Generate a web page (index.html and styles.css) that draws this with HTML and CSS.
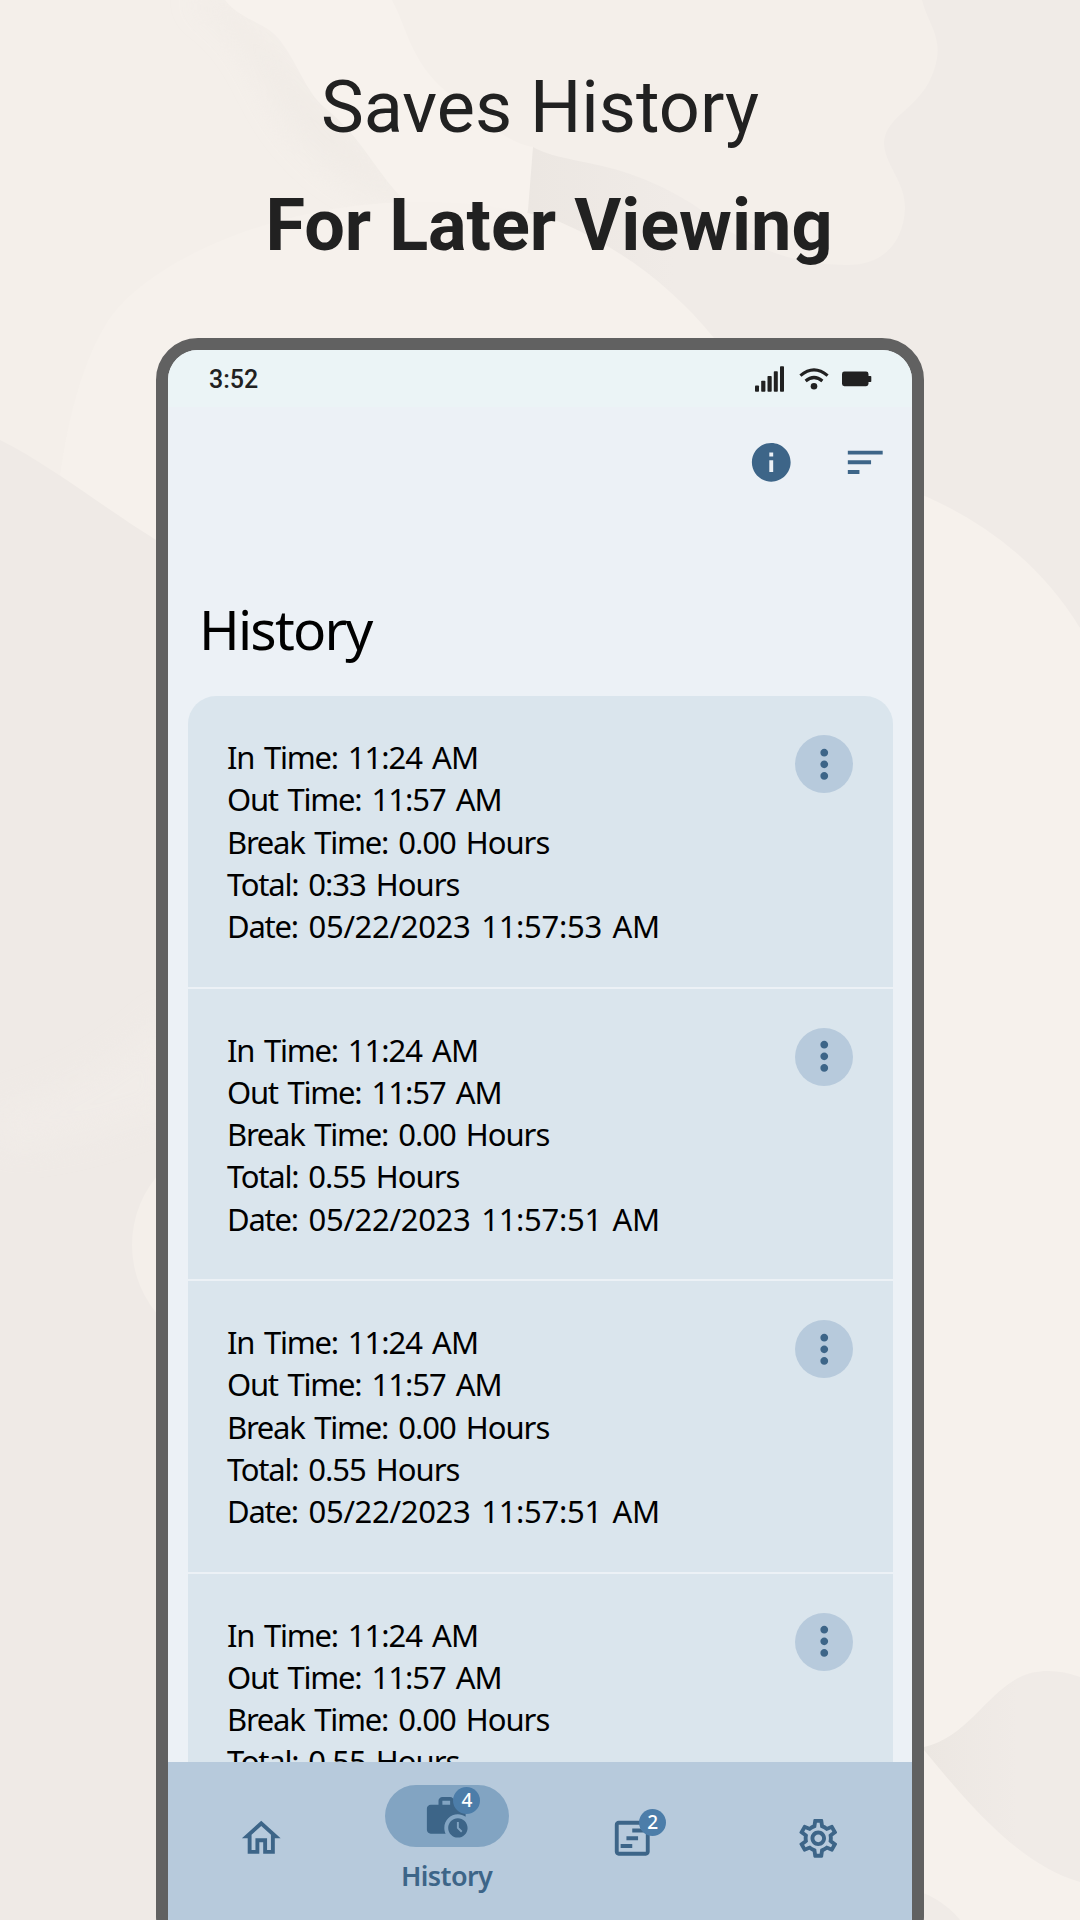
FILE: index.html
```html
<!DOCTYPE html>
<html lang="en">
<head>
<meta charset="utf-8">
<title>Saves History For Later Viewing</title>
<link rel="stylesheet" href="styles.css">
</head>
<body>
<svg class="backdrop" viewBox="0 0 1080 1920" aria-hidden="true">
  <defs>
    <filter id="soft" x="-20%" y="-20%" width="140%" height="140%"><feGaussianBlur stdDeviation="14"/></filter>
    <linearGradient id="fold" x1="0" x2="1"><stop offset="0" stop-color="#ebe6e1"/><stop offset=".3" stop-color="#f0ebe7"/></linearGradient>
    <linearGradient id="leaf" x1="0" x2="1"><stop offset="0" stop-color="#ece7e2"/><stop offset=".6" stop-color="#f0ebe7"/></linearGradient>
  </defs>
  <rect width="1080" height="1920" fill="#f4efea"/>
  <path d="M190 0C260 40 255 90 300 140C330 175 360 190 395 203L420 203L310 85L225 0Z" fill="#efeae5" opacity=".7" filter="url(#soft)"/>
  <path d="M225 0C240 20 265 22 278 38C298 62 304 90 325 108C365 140 380 180 408 203L540 215L533 147C505 143 480 115 455 98C412 68 408 30 392 0Z" fill="#f7f2ed"/>
  <path d="M533 147C555 160 590 160 630 174C675 190 700 208 720 225C760 252 800 265 848 265C885 265 904 240 905 208C905 180 884 165 884 142C886 115 922 108 934 70C945 38 928 25 922 0H1080V640H700L500 300L528 210Z" fill="url(#fold)"/>
  <path d="M60 475C68 420 82 360 110 318C150 262 270 205 410 202C460 201 510 206 560 222C625 250 675 290 714 338V600H156Z" fill="#f6f1ec"/>
  <path d="M0 440C50 465 100 505 156 540H300V1920H0Z" fill="#efeae6"/>
  <path d="M0 1105Q90 1085 170 1010V1110Q70 1150 0 1150Z" fill="#f2ede9" opacity=".6" filter="url(#soft)"/>
  <circle cx="239" cy="1245" r="107" fill="#f4efea"/>
  <path d="M900 486Q1020 530 1080 628V1920H900Z" fill="#f6f1ec"/>
  <path d="M924 1747C965 1738 985 1696 1018 1678C1038 1668 1060 1670 1080 1677V1882C1020 1866 965 1800 924 1750Z" fill="url(#leaf)"/>
  <path d="M900 1885Q940 1895 960 1920H900Z" fill="#f0ebe7"/>
</svg>

<header class="promo">
  <p class="promo-line">Saves History</p>
  <p class="promo-line promo-strong">For Later Viewing</p>
</header>

<main class="phone">
  <div class="status">
    <span class="clock">3:52</span>
    <div class="status-icons">
      <svg width="30" height="26" viewBox="0 0 30 26" fill="#212121"><rect y="19.5" width="4" height="6.3" rx=".8"/><rect x="6.2" y="14.7" width="4.2" height="11.1" rx=".8"/><rect x="12.5" y="10" width="4.2" height="15.8" rx=".8"/><rect x="18.8" y="5.2" width="4" height="20.6" rx=".8"/><rect x="25" y=".3" width="4" height="25.5" rx=".8"/></svg>
      <svg width="30" height="22" viewBox="0 0 30 22"><path d="M1.4 7.6Q15-4 28.6 7.6M6.6 13Q15 6 23.4 13" fill="none" stroke="#212121" stroke-width="3.2"/><circle cx="15" cy="18.3" r="3.3" fill="#212121"/></svg>
      <svg width="30" height="16" viewBox="0 0 30 16" fill="#212121"><rect y=".6" width="26.5" height="14.6" rx="2.4"/><rect x="25" y="5" width="4.3" height="6" rx=".8"/></svg>
    </div>
  </div>

  <div class="toolbar">
    <svg class="icon" viewBox="0 0 24 24"><path d="M12 2C6.48 2 2 6.48 2 12s4.48 10 10 10 10-4.48 10-10S17.52 2 12 2zm1 15h-2v-6h2v6zm0-8h-2V7h2v2z"/></svg>
    <svg class="icon" viewBox="0 0 24 24"><path d="M3 18h6v-2H3v2zM3 6v2h18V6H3zm0 7h12v-2H3v2z"/></svg>
  </div>

  <h1 class="title">History</h1>

  <section class="list">
    <article class="entry">
      <div class="lines"><p><span class="key">In Time:</span> 11:24 AM</p><p><span class="key">Out Time:</span> 11:57 AM</p><p><span class="key">Break Time:</span> 0.00 Hours</p><p><span class="key">Total:</span> 0:33 Hours</p><p class="date"><span class="key">Date:</span> 05/22/2023 11:57:53 AM</p></div>
      <button class="more" aria-label="More"><svg class="icon" viewBox="0 0 24 24"><path d="M12 8c1.1 0 2-.9 2-2s-.9-2-2-2-2 .9-2 2 .9 2 2 2zm0 2c-1.1 0-2 .9-2 2s.9 2 2 2 2-.9 2-2-.9-2-2-2zm0 6c-1.1 0-2 .9-2 2s.9 2 2 2 2-.9 2-2-.9-2-2-2z"/></svg></button>
    </article>
    <article class="entry">
      <div class="lines"><p><span class="key">In Time:</span> 11:24 AM</p><p><span class="key">Out Time:</span> 11:57 AM</p><p><span class="key">Break Time:</span> 0.00 Hours</p><p><span class="key">Total:</span> 0.55 Hours</p><p class="date"><span class="key">Date:</span> 05/22/2023 11:57:51 AM</p></div>
      <button class="more" aria-label="More"><svg class="icon" viewBox="0 0 24 24"><path d="M12 8c1.1 0 2-.9 2-2s-.9-2-2-2-2 .9-2 2 .9 2 2 2zm0 2c-1.1 0-2 .9-2 2s.9 2 2 2 2-.9 2-2-.9-2-2-2zm0 6c-1.1 0-2 .9-2 2s.9 2 2 2 2-.9 2-2-.9-2-2-2z"/></svg></button>
    </article>
    <article class="entry">
      <div class="lines"><p><span class="key">In Time:</span> 11:24 AM</p><p><span class="key">Out Time:</span> 11:57 AM</p><p><span class="key">Break Time:</span> 0.00 Hours</p><p><span class="key">Total:</span> 0.55 Hours</p><p class="date"><span class="key">Date:</span> 05/22/2023 11:57:51 AM</p></div>
      <button class="more" aria-label="More"><svg class="icon" viewBox="0 0 24 24"><path d="M12 8c1.1 0 2-.9 2-2s-.9-2-2-2-2 .9-2 2 .9 2 2 2zm0 2c-1.1 0-2 .9-2 2s.9 2 2 2 2-.9 2-2-.9-2-2-2zm0 6c-1.1 0-2 .9-2 2s.9 2 2 2 2-.9 2-2-.9-2-2-2z"/></svg></button>
    </article>
    <article class="entry">
      <div class="lines"><p><span class="key">In Time:</span> 11:24 AM</p><p><span class="key">Out Time:</span> 11:57 AM</p><p><span class="key">Break Time:</span> 0.00 Hours</p><p><span class="key">Total:</span> 0.55 Hours</p></div>
      <button class="more" aria-label="More"><svg class="icon" viewBox="0 0 24 24"><path d="M12 8c1.1 0 2-.9 2-2s-.9-2-2-2-2 .9-2 2 .9 2 2 2zm0 2c-1.1 0-2 .9-2 2s.9 2 2 2 2-.9 2-2-.9-2-2-2zm0 6c-1.1 0-2 .9-2 2s.9 2 2 2 2-.9 2-2-.9-2-2-2z"/></svg></button>
    </article>
  </section>

  <nav class="nav">
    <div class="tab"><svg class="icon" viewBox="0 0 24 24"><path d="M12 5.69l5 4.5V18h-2v-6H9v6H7v-7.81l5-4.5M12 3L2 12h3v8h6v-6h2v6h6v-8h3L12 3z"/></svg></div>
    <div class="tab active">
      <div class="pill">
        <div class="badged"><svg class="icon" viewBox="0 0 24 24"><path d="M18 11c1.49 0 2.87.47 4 1.26V8c0-1.11-.89-2-2-2h-4V4c0-1.11-.89-2-2-2h-4c-1.11 0-2 .89-2 2v2H4c-1.11 0-1.99.89-1.99 2L2 19c0 1.11.89 2 2 2h7.68c-.43-.91-.68-1.92-.68-3 0-3.87 3.13-7 7-7zm-8-7h4v2h-4V4z"/><path d="M18 13c-2.76 0-5 2.24-5 5s2.24 5 5 5 5-2.24 5-5-2.24-5-5-5zm1.65 7.35L17.5 18.2V15h1v2.79l1.85 1.85-.7.71z"/></svg><span class="badge">4</span></div>
      </div>
      <span class="tab-label">History</span>
    </div>
    <div class="tab"><div class="badged"><svg class="icon" viewBox="0 0 24 24"><path d="M19 3H5c-1.1 0-2 .9-2 2v14c0 1.1.9 2 2 2h14c1.1 0 2-.9 2-2V5c0-1.1-.9-2-2-2zm0 16H5V5h14v14zM12 7h6v2h-6zM9 11h6v2H9zM6 15h6v2H6z"/></svg><span class="badge">2</span></div></div>
    <div class="tab"><svg class="icon" viewBox="0 0 24 24"><path d="M19.43 12.98c.04-.32.07-.64.07-.98 0-.34-.03-.66-.07-.98l2.11-1.65c.19-.15.24-.42.12-.64l-2-3.46c-.09-.16-.26-.25-.44-.25-.06 0-.12.01-.17.03l-2.49 1c-.52-.4-1.08-.73-1.69-.98l-.38-2.65C14.46 2.18 14.25 2 14 2h-4c-.25 0-.46.18-.49.42l-.38 2.65c-.61.25-1.17.59-1.69.98l-2.49-1c-.06-.02-.12-.03-.18-.03-.17 0-.34.09-.43.25l-2 3.46c-.13.22-.07.49.12.64l2.11 1.65c-.04.32-.07.65-.07.98 0 .33.03.66.07.98l-2.11 1.65c-.19.15-.24.42-.12.64l2 3.46c.09.16.26.25.44.25.06 0 .12-.01.17-.03l2.49-1c.52.4 1.08.73 1.69.98l.38 2.65c.03.24.24.42.49.42h4c.25 0 .46-.18.49-.42l.38-2.65c.61-.25 1.17-.59 1.69-.98l2.49 1c.06.02.12.03.18.03.17 0 .34-.09.43-.25l2-3.46c.12-.22.07-.49-.12-.64l-2.11-1.65zm-1.98-1.71c.04.31.05.52.05.73 0 .21-.02.43-.05.73l-.14 1.13.89.7 1.08.84-.7 1.21-1.27-.51-1.04-.42-.9.68c-.43.32-.84.56-1.25.73l-1.06.43-.16 1.13-.2 1.35h-1.4l-.19-1.35-.16-1.13-1.06-.43c-.43-.18-.83-.41-1.23-.71l-.91-.7-1.06.43-1.27.51-.7-1.21 1.08-.84.89-.7-.14-1.13c-.03-.31-.05-.54-.05-.74s.02-.43.05-.73l.14-1.13-.89-.7-1.08-.84.7-1.21 1.27.51 1.04.42.9-.68c.43-.32.84-.56 1.25-.73l1.06-.43.16-1.13.2-1.35h1.39l.19 1.35.16 1.13 1.06.43c.43.18.83.41 1.23.71l.91.7 1.06-.43 1.27-.51.7 1.21-1.07.85-.89.7.14 1.13zM12 8c-2.21 0-4 1.79-4 4s1.79 4 4 4 4-1.79 4-4-1.79-4-4-4zm0 6c-1.1 0-2-.9-2-2s.9-2 2-2 2 .9 2 2-.9 2-2 2z"/></svg></div>
  </nav>
</main>
</body>
</html>
```
FILE: styles.css
```css
* { box-sizing: border-box; }
html, body { height: 1920px; overflow: hidden; }
body { margin: 0; width: 1080px; background: #f4efea; font-family: "Noto Sans", sans-serif; color: #000; }
p, h1 { margin: 0; }
svg { display: block; flex: none; }

.backdrop { position: absolute; inset: 0; width: 1080px; height: 1920px; z-index: -1; }

.promo { height: 338px; padding-top: 49px; font: 400 72px/118px Roboto, sans-serif; color: #212121; text-align: center; }
.promo-strong { font-weight: 700; padding-left: 18px; }

.phone { display: flex; flex-direction: column; width: 768px; height: 1620px; margin: 0 auto; border: 12px solid #616161; border-radius: 42px; background: #ecf1f6; overflow: hidden; }

.status { display: flex; flex: none; justify-content: space-between; height: 57px; padding: 0 40px 0 41px; background: #ebf4f6; color: #212121; }
.clock { font: 500 25px/59px Roboto, sans-serif; }
.status-icons { display: flex; align-items: center; height: 57px; gap: 13.5px; }

.icon { width: 46.5px; height: 46.5px; fill: #3d6588; }

.toolbar { display: flex; flex: none; justify-content: flex-end; gap: 47.5px; height: 110px; align-items: center; padding-right: 24px; }

.title { flex: none; height: 179px; padding: 74px 0 0 31px; font-weight: 400; font-size: 55px; line-height: 75px; letter-spacing: -1.8px; }

.list { flex: none; height: 1066px; margin: 0 19.5px 0 20px; display: flex; flex-direction: column; gap: 2px; overflow: hidden; border-radius: 28px 28px 0 0; }
.entry { flex: none; display: flex; justify-content: space-between; height: 290.5px; padding: 39px 39.5px 0 39px; background: #dae5ed; }
.lines { padding-top: 1px; font-size: 31px; line-height: 42.3px; white-space: nowrap; letter-spacing: -1px; word-spacing: 3px; }
.key { letter-spacing: -1.25px; }
.date { letter-spacing: -.3px; }
.more { display: flex; align-items: center; justify-content: center; width: 58px; height: 58px; padding: 0; border: 0; border-radius: 50%; background: #b7cadc; }

.nav { flex: none; display: grid; grid-template-columns: repeat(4, 1fr); height: 182px; padding-right: 1px; background: #b7cadc; }
.tab { display: flex; flex-direction: column; align-items: center; justify-content: flex-start; padding-top: 53px; }
.tab.active { padding-top: 23px; }
.pill { display: flex; align-items: center; justify-content: center; width: 124px; height: 62px; border-radius: 31px; background: #82a4c2; }
.badged { position: relative; }
.badge { position: absolute; left: 30px; top: -6px; width: 27px; height: 27px; border-radius: 50%; background: #4c7da9; color: #fff; font-size: 19px; line-height: 27px; text-align: center; font-weight: 500; }
.tab-label { margin-top: 10px; font-size: 27px; line-height: 38px; font-weight: 600; letter-spacing: -.6px; color: #3d6588; }
```
